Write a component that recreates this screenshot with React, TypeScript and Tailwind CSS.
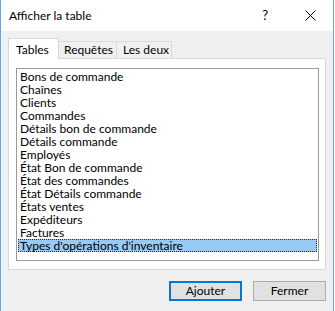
import React from "react";

const tables = [
  "Bons de commande",
  "Chaînes",
  "Clients",
  "Commandes",
  "Détails bon de commande",
  "Détails commande",
  "Employés",
  "État Bon de commande",
  "État des commandes",
  "État Détails commande",
  "États ventes",
  "Expéditeurs",
  "Factures",
  "Types d'opérations d'inventaire",
];

const App = () => {
  const selected = tables.length - 1;
  return (
    <div
      className="w-[335px] h-[311px] bg-white overflow-hidden text-[12px] text-black"
      style={{ fontFamily: 'Lato, "Noto Sans", sans-serif' }}
    >
      <div className="flex h-full w-[334px] flex-col border-x border-[#5ea9e3]">
        {/* title bar */}
        <div className="flex h-[31px] items-center bg-white pl-[8px]">
          <span className="text-[12px] leading-none">Afficher la table</span>
          <span className="ml-auto mr-[37px] text-[13px] leading-none">?</span>
          <svg width="11" height="11" viewBox="0 0 11 11" className="mr-[17px]">
            <path d="M0.5 0.5 L10.5 10.5 M10.5 0.5 L0.5 10.5" stroke="#000" strokeWidth="1" />
          </svg>
        </div>

        <div className="flex flex-1 flex-col bg-[#f0f0f0] pl-[7px]">
          {/* tabs */}
          <div className="mt-[7px] flex h-[20px] items-end whitespace-nowrap">
            <div className="relative z-10 -mb-px flex h-[21px] w-[51px] items-start border border-b-0 border-[#d9d9d9] bg-white pl-[7px] pt-[2px]">
              Tables
            </div>
            <div className="flex h-[17px] w-[58px] items-center border border-b-0 border-l-0 border-[#d9d9d9] bg-[#f0f0f0] pl-[5px]">
              Requêtes
            </div>
            <div className="flex h-[17px] w-[55px] items-center border border-b-0 border-l-0 border-[#d9d9d9] bg-[#f0f0f0] pl-[6px]">
              Les deux
            </div>
          </div>

          {/* panel */}
          <div className="h-[212px] w-[318px] border border-[#d9d9d9] bg-white pl-[7px] pt-[9px]">
            <div className="h-[193px] w-[303px] border border-[#9a9a9a] bg-white px-px pt-px">
              {tables.map((t, i) => (
                <div
                  key={t}
                  className={
                    i === selected
                      ? "h-[13px] border border-dotted border-[#3a2a1a] bg-[#99c9f5] pl-px leading-[11px] whitespace-nowrap"
                      : "h-[13px] pl-[2px] leading-[13px] whitespace-nowrap"
                  }
                >
                  {t}
                </div>
              ))}
            </div>
          </div>

          {/* buttons */}
          <div className="mt-[11px] flex w-[318px] justify-end gap-[11px]">
            <button className="h-[20px] w-[73px] border-2 border-[#0078d7] bg-[#e1e1e1] leading-none">
              Ajouter
            </button>
            <button className="h-[20px] w-[73px] border border-[#adadad] bg-[#e1e1e1] leading-none">
              Fermer
            </button>
          </div>
        </div>
      </div>
    </div>
  );
};

export default App;
